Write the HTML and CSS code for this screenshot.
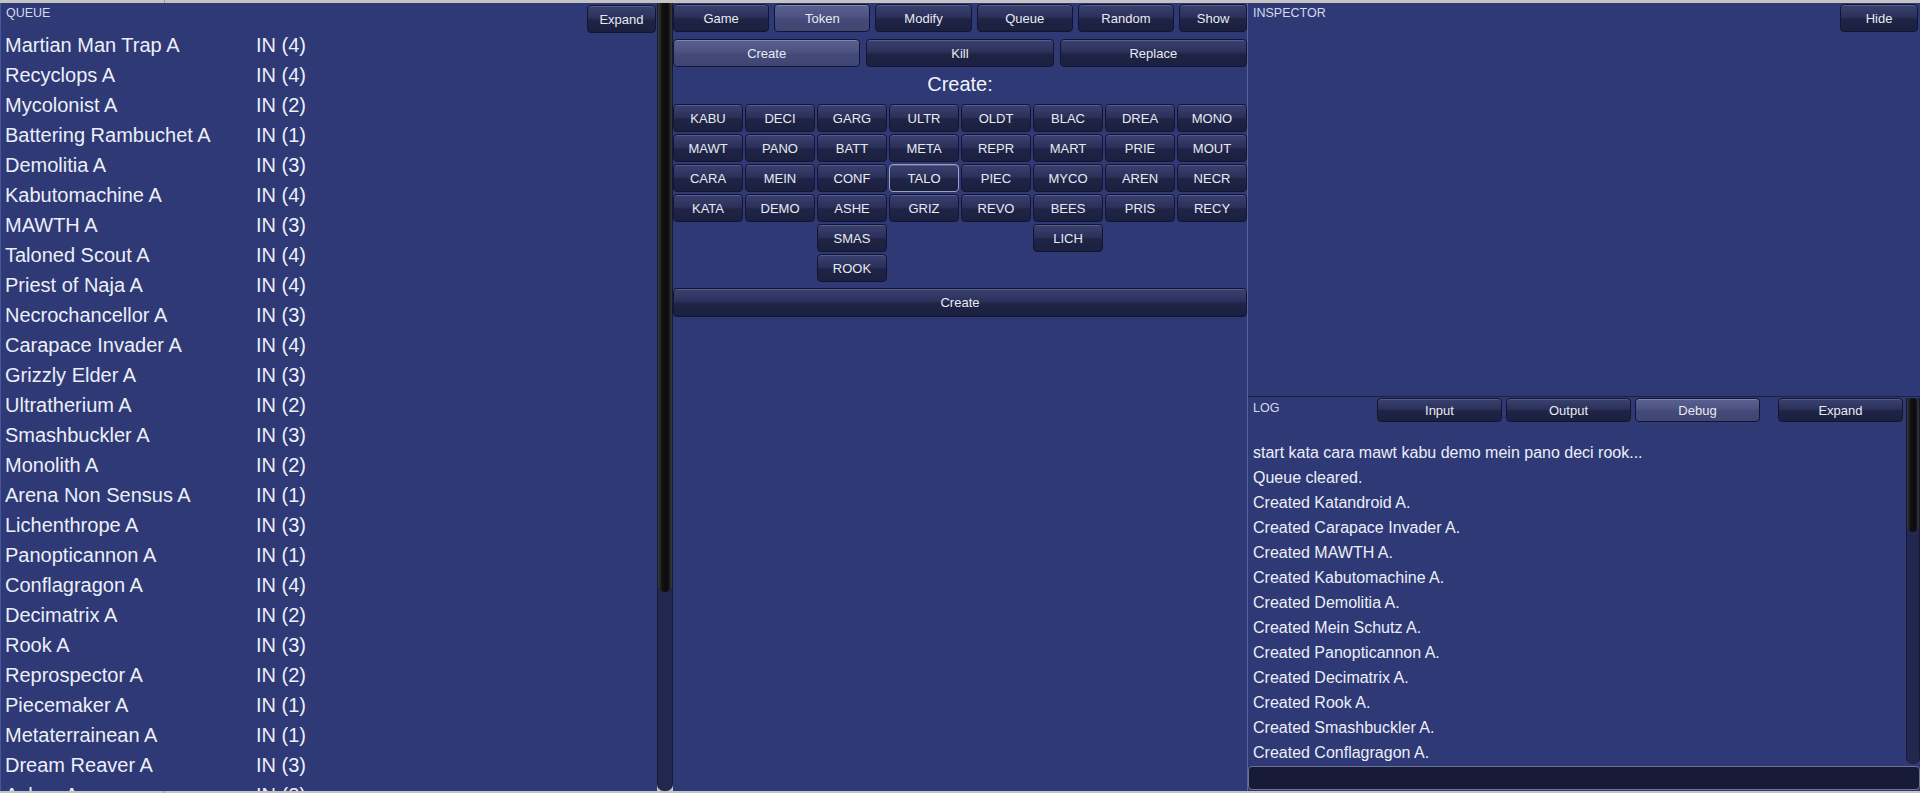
FILE: index.html
```html
<!DOCTYPE html>
<html>
<head>
<meta charset="utf-8">
<title>Console</title>
<link rel="stylesheet" href="styles.css">
</head>
<body>
<div class="app">
  <section class="queue">
    <header class="phead">
      <span class="plabel">QUEUE</span>
      <button class="btn qexpand">Expand</button>
    </header>
    <div class="qlist">
      <div class="qrow"><span class="qname">Martian Man Trap A</span><span>IN (4)</span></div>
      <div class="qrow"><span class="qname">Recyclops A</span><span>IN (4)</span></div>
      <div class="qrow"><span class="qname">Mycolonist A</span><span>IN (2)</span></div>
      <div class="qrow"><span class="qname">Battering Rambuchet A</span><span>IN (1)</span></div>
      <div class="qrow"><span class="qname">Demolitia A</span><span>IN (3)</span></div>
      <div class="qrow"><span class="qname">Kabutomachine A</span><span>IN (4)</span></div>
      <div class="qrow"><span class="qname">MAWTH A</span><span>IN (3)</span></div>
      <div class="qrow"><span class="qname">Taloned Scout A</span><span>IN (4)</span></div>
      <div class="qrow"><span class="qname">Priest of Naja A</span><span>IN (4)</span></div>
      <div class="qrow"><span class="qname">Necrochancellor A</span><span>IN (3)</span></div>
      <div class="qrow"><span class="qname">Carapace Invader A</span><span>IN (4)</span></div>
      <div class="qrow"><span class="qname">Grizzly Elder A</span><span>IN (3)</span></div>
      <div class="qrow"><span class="qname">Ultratherium A</span><span>IN (2)</span></div>
      <div class="qrow"><span class="qname">Smashbuckler A</span><span>IN (3)</span></div>
      <div class="qrow"><span class="qname">Monolith A</span><span>IN (2)</span></div>
      <div class="qrow"><span class="qname">Arena Non Sensus A</span><span>IN (1)</span></div>
      <div class="qrow"><span class="qname">Lichenthrope A</span><span>IN (3)</span></div>
      <div class="qrow"><span class="qname">Panopticannon A</span><span>IN (1)</span></div>
      <div class="qrow"><span class="qname">Conflagragon A</span><span>IN (4)</span></div>
      <div class="qrow"><span class="qname">Decimatrix A</span><span>IN (2)</span></div>
      <div class="qrow"><span class="qname">Rook A</span><span>IN (3)</span></div>
      <div class="qrow"><span class="qname">Reprospector A</span><span>IN (2)</span></div>
      <div class="qrow"><span class="qname">Piecemaker A</span><span>IN (1)</span></div>
      <div class="qrow"><span class="qname">Metaterrainean A</span><span>IN (1)</span></div>
      <div class="qrow"><span class="qname">Dream Reaver A</span><span>IN (3)</span></div>
      <div class="qrow"><span class="qname">Ashes A</span><span>IN (2)</span></div>
    </div>
  </section>

  <div class="vscroll qscroll"><div class="thumb qthumb"></div></div>

  <section class="middle">
    <nav class="tabs">
      <button class="btn tab">Game</button>
      <button class="btn tab on">Token</button>
      <button class="btn tab">Modify</button>
      <button class="btn tab">Queue</button>
      <button class="btn tab">Random</button>
      <button class="btn tab show">Show</button>
    </nav>
    <div class="subtabs">
      <button class="btn sub on">Create</button>
      <button class="btn sub">Kill</button>
      <button class="btn sub">Replace</button>
    </div>
    <h2 class="title">Create:</h2>
    <div class="grid">
      <button class="btn cell">KABU</button>
      <button class="btn cell">DECI</button>
      <button class="btn cell">GARG</button>
      <button class="btn cell">ULTR</button>
      <button class="btn cell">OLDT</button>
      <button class="btn cell">BLAC</button>
      <button class="btn cell">DREA</button>
      <button class="btn cell">MONO</button>
      <button class="btn cell">MAWT</button>
      <button class="btn cell">PANO</button>
      <button class="btn cell">BATT</button>
      <button class="btn cell">META</button>
      <button class="btn cell">REPR</button>
      <button class="btn cell">MART</button>
      <button class="btn cell">PRIE</button>
      <button class="btn cell">MOUT</button>
      <button class="btn cell">CARA</button>
      <button class="btn cell">MEIN</button>
      <button class="btn cell">CONF</button>
      <button class="btn cell focus">TALO</button>
      <button class="btn cell">PIEC</button>
      <button class="btn cell">MYCO</button>
      <button class="btn cell">AREN</button>
      <button class="btn cell">NECR</button>
      <button class="btn cell">KATA</button>
      <button class="btn cell">DEMO</button>
      <button class="btn cell">ASHE</button>
      <button class="btn cell">GRIZ</button>
      <button class="btn cell">REVO</button>
      <button class="btn cell">BEES</button>
      <button class="btn cell">PRIS</button>
      <button class="btn cell">RECY</button>
      <button class="btn cell col3">SMAS</button>
      <button class="btn cell col6">LICH</button>
      <button class="btn cell col3">ROOK</button>
    </div>
    <button class="btn wide">Create</button>
  </section>

  <section class="right">
    <div class="inspector">
      <header class="phead">
        <span class="plabel">INSPECTOR</span>
        <button class="btn hide">Hide</button>
      </header>
    </div>
    <div class="log">
      <div class="logmain">
        <div class="logcol">
          <header class="loghead">
            <span class="plabel loglabel">LOG</span>
            <button class="btn lb">Input</button>
            <button class="btn lb">Output</button>
            <button class="btn lb on">Debug</button>
            <button class="btn lb lexpand">Expand</button>
          </header>
          <div class="loglines">
            <div>start kata cara mawt kabu demo mein pano deci rook...</div>
            <div>Queue cleared.</div>
            <div>Created Katandroid A.</div>
            <div>Created Carapace Invader A.</div>
            <div>Created MAWTH A.</div>
            <div>Created Kabutomachine A.</div>
            <div>Created Demolitia A.</div>
            <div>Created Mein Schutz A.</div>
            <div>Created Panopticannon A.</div>
            <div>Created Decimatrix A.</div>
            <div>Created Rook A.</div>
            <div>Created Smashbuckler A.</div>
            <div>Created Conflagragon A.</div>
          </div>
        </div>
        <div class="vscroll lscroll"><div class="thumb lthumb"></div></div>
      </div>
      <div class="loginput"></div>
    </div>
  </section>
</div>
</body>
</html>
```

FILE: styles.css
```css
* { box-sizing: border-box; }

html, body {
  margin: 0;
  padding: 0;
  background: #bdbdbd;
}

body {
  font-family: "Liberation Sans", Arial, sans-serif;
  color: #eceff8;
  overflow: hidden;
}

.app {
  display: flex;
  width: 1920px;
  height: 793px;
  padding: 3px 0 2px 0;
  background: linear-gradient(to right, #c4c4c4 0, #c4c4c4 164px, #9a9a9a 164px, #9a9a9a 165px, #c4c4c4 165px);
}

button {
  font-family: inherit;
  margin: 0;
  padding: 0;
  cursor: default;
}

.btn {
  color: #e8eaf2;
  font-size: 13px;
  border: 1px solid #121530;
  border-radius: 4px;
  background: linear-gradient(to bottom, #3a4170 0%, #2b315a 45%, #1f2446 55%, #1b2040 100%);
  box-shadow: inset 0 1px 0 rgba(160, 170, 210, 0.28);
}

.btn.on {
  background: linear-gradient(to bottom, #5a6190 0%, #4c5382 45%, #434a78 55%, #3f4673 100%);
  box-shadow: inset 0 1px 0 rgba(200, 205, 230, 0.35);
}

.btn.focus {
  border-color: #9ba2bc;
}

/* panels */
.queue, .middle, .inspector, .log {
  background: #2e3976;
}

.phead {
  display: flex;
  align-items: flex-start;
  justify-content: space-between;
  height: 27px;
}

.plabel {
  font-size: 12.5px;
  line-height: 14px;
  color: #d6daea;
  padding-left: 5px;
  margin-top: 3px;
}

/* queue */
.queue {
  width: 657px;
  overflow: hidden;
  border-left: 1px solid #4a55a0;
}

.qexpand {
  width: 69px;
  height: 28px;
  margin-top: 2px;
  margin-right: 1px;
}

.qlist {
  font-size: 20px;
  line-height: 30px;
}

.qrow {
  display: flex;
  white-space: nowrap;
}

.qname {
  width: 255px;
  padding-left: 4px;
}

/* scrollbars */
.vscroll {
  background: #21274f;
  border-left: 1px solid #151936;
  border-right: 1px solid #151936;
  border-radius: 0 0 7px 7px;
}

.qscroll {
  width: 16px;
  height: 788px;
}

.thumb {
  background: linear-gradient(to right, #3a3a3a 0%, #111 30%, #0c0c0c 70%, #3a3a3a 100%);
  border-radius: 0 0 7px 7px;
}

.qthumb {
  height: 589px;
}

.lscroll {
  width: 14px;
  height: 366px;
  margin-top: 1px;
}

.lthumb {
  height: 134px;
  border-radius: 6px 6px 6px 6px;
}

/* middle */
.middle {
  width: 574px;
  padding-top: 1px;
  display: flex;
  flex-direction: column;
}

.tabs {
  display: flex;
  gap: 5px;
  height: 28px;
}

.tab {
  flex: 1 1 0;
  height: 28px;
}

.tab.show {
  flex: 0 0 68px;
}

.subtabs {
  display: flex;
  gap: 6px;
  margin-top: 7px;
  height: 28px;
}

.sub {
  flex: 1 1 0;
  height: 28px;
}

.title {
  margin: 0 0 3px 0;
  height: 34px;
  line-height: 34px;
  font-size: 20px;
  font-weight: normal;
  text-align: center;
  color: #f2f4fa;
}

.grid {
  display: grid;
  grid-template-columns: repeat(8, 70px);
  grid-auto-rows: 28px;
  gap: 2px;
}

.cell {
  height: 28px;
}

.col3 { grid-column: 3; }
.col6 { grid-column: 6; }

.wide {
  margin-top: 6px;
  height: 29px;
  width: 574px;
}

/* right */
.right {
  flex: 1;
  display: flex;
  flex-direction: column;
  border-left: 1px solid #5b639a;
}

.inspector {
  height: 394px;
  border-bottom: 1px solid #1a1f44;
}

.hide {
  width: 78px;
  height: 28px;
  margin-top: 1px;
  margin-right: 2px;
}

.log {
  flex: 1;
  display: flex;
  flex-direction: column;
}

.logmain {
  display: flex;
  height: 368px;
}

.logcol {
  flex: 1;
}

.loghead {
  display: flex;
  align-items: flex-start;
  gap: 4px;
  height: 27px;
}

.loglabel {
  width: 125px;
  margin-top: 4px;
}

.lb {
  width: 125px;
  height: 24px;
  margin-top: 1px;
}

.lexpand {
  margin-left: 14px;
}

.loglines {
  padding-top: 16px;
  padding-left: 5px;
  font-size: 16px;
  line-height: 25px;
  white-space: nowrap;
}

.loginput {
  height: 24px;
  margin-top: 1px;
  background: #181b37;
  border: 1px solid #6c7294;
  border-radius: 4px;
}
```
